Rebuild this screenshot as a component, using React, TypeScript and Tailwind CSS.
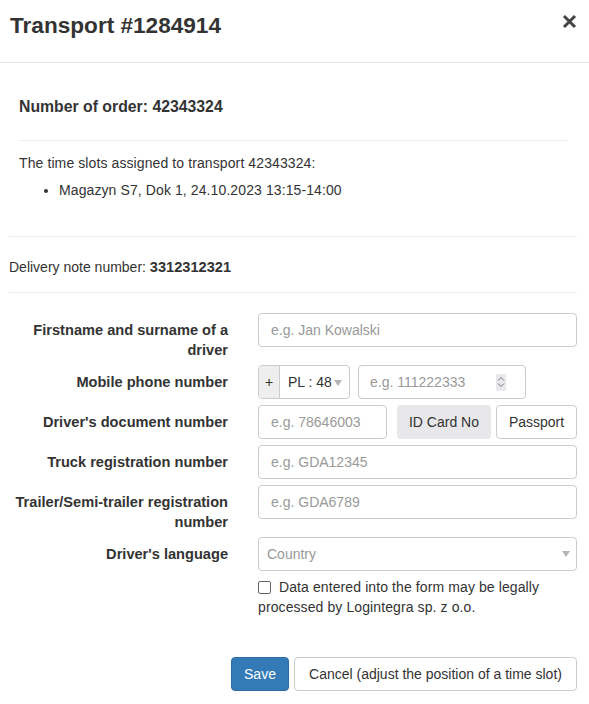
import React from "react";

const font = "font-['Liberation_Sans',Arial,Helvetica,sans-serif]";

function TextInput({ placeholder, className = "" }: { placeholder: string; className?: string }) {
  return (
    <div
      className={`flex h-[34px] items-center rounded-[4px] border border-[#ccc] bg-white px-[12px] text-[14px] text-[#999] ${className}`}
    >
      {placeholder}
    </div>
  );
}

function Row({
  label,
  children,
  mb = "mb-[6px]",
}: {
  label: React.ReactNode;
  children: React.ReactNode;
  mb?: string;
}) {
  return (
    <div className={`flex items-start ${mb}`}>
      <div className="w-[219px] shrink-0 pt-[7px] text-right text-[14.6px] font-bold leading-[20px] text-[#333]">
        {label}
      </div>
      <div className="ml-[30px] w-[319px]">{children}</div>
    </div>
  );
}

function Caret({ className = "" }: { className?: string }) {
  return (
    <svg width="8" height="6" viewBox="0 0 8 6" className={className}>
      <path d="M0 0h8L4 6z" fill="#b5b5b5" />
    </svg>
  );
}

export default function App() {
  return (
    <div className={`h-[704px] w-[589px] bg-white text-[14px] leading-[20px] text-[#333] ${font}`}>
      {/* header */}
      <div className="flex h-[63px] items-start justify-between border-b border-[#e5e5e5] pl-[10px] pr-[12px] pt-[13px]">
        <h4 className="text-[22.6px] font-bold leading-[26px] text-[#333]">Transport #1284914</h4>
        <svg width="15" height="15" viewBox="0 0 15 15" className="mt-[1px]">
          <path d="M2 2L13 13M13 2L2 13" stroke="#444" strokeWidth="3" />
        </svg>
      </div>

      {/* order info */}
      <div className="px-[19px] pr-[22px]">
        <div className="mt-[35px] text-[15.8px] font-bold leading-[18px]">Number of order: 42343324</div>
        <hr className="mt-[24px] border-0 border-t border-[#eee]" />
        <p className="mt-[12px] tracking-[0.1px]">The time slots assigned to transport 42343324:</p>
        <ul className="mt-[7px] list-disc pl-[40px] tracking-[0.1px]">
          <li>Magazyn S7, Dok 1, 24.10.2023 13:15-14:00</li>
        </ul>
      </div>

      <div className="pl-[9px] pr-[12px]">
        <hr className="mt-[36px] border-0 border-t border-[#eee]" />
        <p className="mt-[20px]">
          Delivery note number: <b className="text-[14.6px]">3312312321</b>
        </p>
        <hr className="mt-[15px] border-0 border-t border-[#eee]" />

        {/* form */}
        <div className="mt-[20px]">
          <Row label={<>Firstname and surname of a<br />driver</>} mb="mb-[5px]">
            <TextInput placeholder="e.g. Jan Kowalski" />
          </Row>

          <Row label="Mobile phone number">
            <div className="flex items-center">
              <div className="flex h-[34px] w-[92px] rounded-[4px] border border-[#ccc]">
                <div className="flex w-[21px] items-center justify-center rounded-l-[3px] border-r border-[#ccc] bg-[#eee] text-[14px]">
                  +
                </div>
                <div className="flex flex-1 items-center pl-[8px] text-[14px]">
                  PL : 48
                  <Caret className="ml-[2px] mt-[1px]" />
                </div>
              </div>
              <div className="ml-[8px] flex h-[34px] w-[168px] items-center justify-between rounded-[4px] border border-[#ccc] pl-[11px] pr-[19px] text-[#999]">
                <span>e.g. 111222333</span>
                <span className="flex h-[17px] w-[10px] items-center justify-center bg-[#e9e9ed]">
                  <svg width="8" height="12" viewBox="0 0 8 12">
                    <path d="M1 4.5L4 1.5L7 4.5M1 7.5L4 10.5L7 7.5" stroke="#777" strokeWidth="1" fill="none" />
                  </svg>
                </span>
              </div>
            </div>
          </Row>

          <Row label="Driver's document number">
            <div className="flex items-center">
              <TextInput placeholder="e.g. 78646003" className="w-[129px]" />
              <div className="ml-[10px] flex h-[34px] w-[94px] items-center justify-center rounded-[4px] bg-[#e8e8eb] text-[#333]">
                ID Card No
              </div>
              <div className="ml-[5px] flex h-[34px] w-[81px] items-center justify-center rounded-[4px] border border-[#ccc] bg-white text-[#333]">
                Passport
              </div>
            </div>
          </Row>

          <Row label="Truck registration number">
            <TextInput placeholder="e.g. GDA12345" />
          </Row>

          <Row label={<>Trailer/Semi-trailer registration<br />number</>} mb="mb-[5px]">
            <TextInput placeholder="e.g. GDA6789" />
          </Row>

          <Row label="Driver's language">
            <div className="flex h-[34px] items-center justify-between rounded-[4px] border border-[#ccc] pl-[8px] pr-[6px] text-[#999]">
              <span>Country</span>
              <Caret />
            </div>
          </Row>

          <div className="ml-[249px] flex w-[319px] items-start">
            <div className="leading-[20px] tracking-[0.1px]">
              <span className="mr-[8px] inline-block h-[13px] w-[13px] translate-y-[2px] rounded-[2px] border-[1.5px] border-[#666] bg-white" />
              Data entered into the form may be legally processed by Logintegra sp. z o.o.
            </div>
          </div>
        </div>

        {/* footer */}
        <div className="mt-[40px] flex justify-end gap-[5px]">
          <button className="h-[34px] w-[58px] rounded-[4px] border border-[#2e6da4] bg-[#337ab7] text-[14px] text-white">
            Save
          </button>
          <button className="h-[34px] w-[283px] rounded-[4px] border border-[#ccc] bg-white text-[14px] text-[#333]">
            Cancel (adjust the position of a time slot)
          </button>
        </div>
      </div>
    </div>
  );
}
